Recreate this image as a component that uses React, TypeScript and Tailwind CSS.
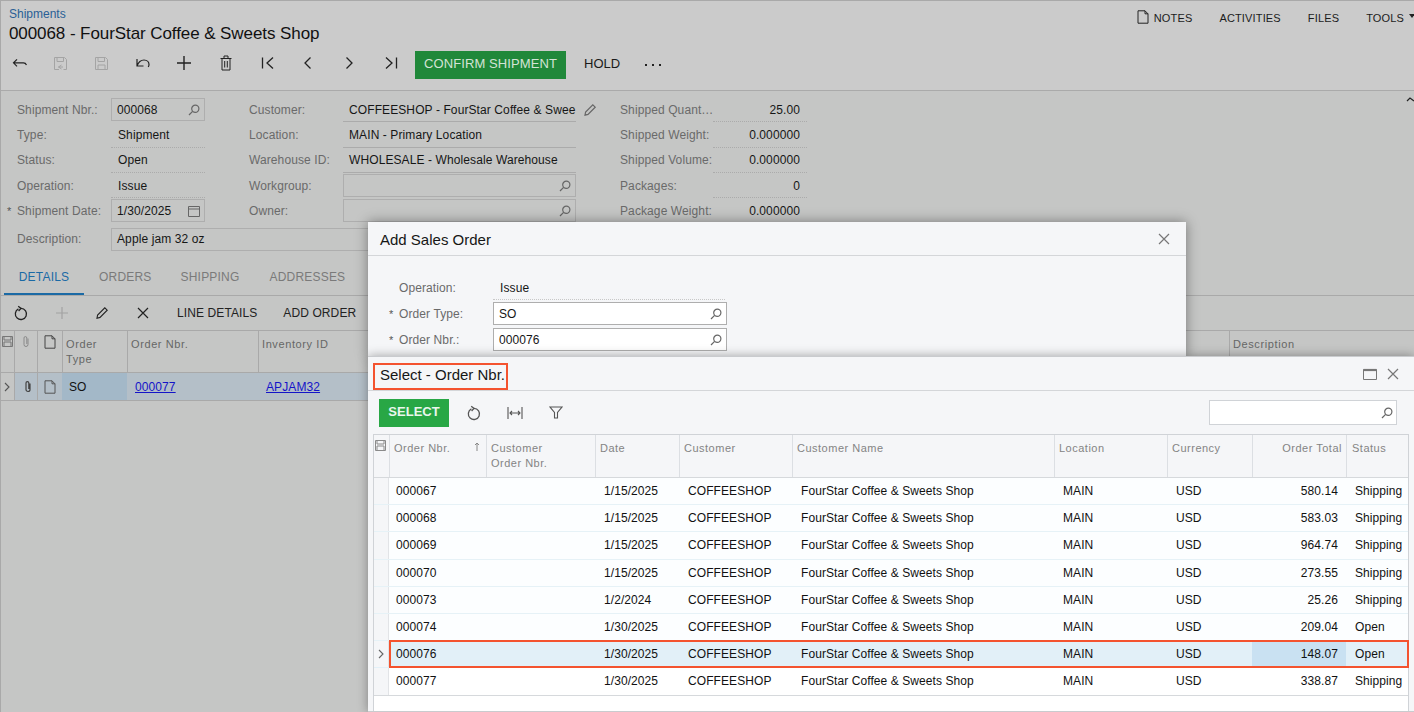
import React from "react";

type P = { className?: string; children?: React.ReactNode; w?: number; h?: number; sw?: number };
const Ic = ({ className = "", children, w = 16, h = 16, sw = 1.2 }: P) => (
  <svg width={w} height={h} viewBox={`0 0 ${w} ${h}`} fill="none" stroke="currentColor" strokeWidth={sw} className={className}>
    {children}
  </svg>
);
const Search = ({ className = "" }: { className?: string }) => (
  <Ic w={12} h={12} className={className}>
    <circle cx="7.3" cy="4.8" r="3.6" />
    <path d="M4.6 7.4 1 11" />
  </Ic>
);
const Close = ({ className = "" }: { className?: string }) => (
  <Ic w={12} h={12} className={className}>
    <path d="M1 1 11 11M11 1 1 11" />
  </Ic>
);
const Refresh = ({ className = "" }: { className?: string }) => (
  <Ic w={14} h={16} sw={1.3} className={className}>
    <path d="M4.4 3.9A5.6 5.6 0 1 0 7 3.3" />
    <path d="M4.2 1.2 7 3.4 4.6 6" />
  </Ic>
);
const Note = ({ className = "" }: { className?: string }) => (
  <Ic w={12} h={14} sw={1} className={className}>
    <path d="M1 .8h7l3 3v9.4H1zM8 .8v3h3" />
  </Ic>
);

const label = "text-[12px] tracking-[0.1px] text-[#6a6a6a]";
const val = "text-[12px] tracking-[0.1px] text-[#161616]";

const Dotted = ({ l, v, right }: { l: string; v: string; right?: boolean }) => (
  <div className="flex h-[25.3px] items-center">
    <span className={`${label} ${right ? "w-[93px]" : "w-[94px]"} whitespace-nowrap`}>{l}</span>
    <span
      className={`${val} flex h-full w-[94px] items-center border-b border-dotted border-[#ababab] pt-[1px] ${
        right ? "justify-end pr-[7px]" : "pl-[7px]"
      }`}
    >
      {v}
    </span>
  </div>
);

const Input = ({ v, w, icon, bg = "" }: { v?: string; w: string; icon?: React.ReactNode; bg?: string }) => (
  <div className={`${w} ${bg} flex h-[23px] items-center justify-between border border-[#aeaeae] pl-[5px] pr-[4px] ${val}`}>
    <span>{v}</span>
    {icon}
  </div>
);

const Req = () => <span className="absolute -left-[10px] top-[1px] text-[11px] text-[#555]">*</span>;

const Under = ({ l, v, edit }: { l: string; v: string; edit?: boolean }) => (
  <div className="flex h-[25.3px] items-center">
    <span className={`${label} w-[94px]`}>{l}</span>
    <span className={`${val} flex h-full w-[233px] items-center whitespace-nowrap border-b border-[#ababab] pl-[6px] pt-[1px]`}>
      {v}
    </span>
    {edit && (
      <Ic w={14} h={14} className="ml-[7px] text-[#666]">
        <path d="M2 12.2 2.6 9 9.8 1.8l2.4 2.4L5 11.4z" />
      </Ic>
    )}
  </div>
);

const rows = [
  ["000067", "1/15/2025", "580.14", "Shipping"],
  ["000068", "1/15/2025", "583.03", "Shipping"],
  ["000069", "1/15/2025", "964.74", "Shipping"],
  ["000070", "1/15/2025", "273.55", "Shipping"],
  ["000073", "1/2/2024", "25.26", "Shipping"],
  ["000074", "1/30/2025", "209.04", "Open"],
  ["000076", "1/30/2025", "148.07", "Open"],
  ["000077", "1/30/2025", "338.87", "Shipping"],
];
const cols = "grid grid-cols-[15px_97px_109px_84px_113px_262px_113px_85px_94px_63px]";
const headCell = "border-l border-[#dcdfe3] pl-[4px] pr-[4px] pt-[6px] text-[11px] leading-[15px] tracking-[0.5px] text-[#848484]";
const baseHead = "border-l border-[#a9a9a9] px-[3px] pt-[6px] text-[11px] leading-[15px] tracking-[0.6px] text-[#666]";

export default function App() {
  return (
    <div className="relative h-[712px] w-[1414px] overflow-hidden border-l border-t border-[#a9a9a9] bg-[#c5c6c5] font-['Liberation_Sans',Arial,sans-serif]">
      {/* Header */}
      <header className="h-[90px] border-b border-[#aaaaaa] bg-[#cbcbcb] pl-[8px] pt-[6px]">
        <div className="flex justify-between">
          <div>
            <div className="h-[14px] text-[12px] leading-[14px] text-[#2a5f96]">Shipments</div>
            <h1 className="mt-[1px] text-[17px] leading-[24px] tracking-[-0.08px] text-[#111]">000068 - FourStar Coffee &amp; Sweets Shop</h1>
          </div>
          <div className="flex h-[22px] items-start pt-[3px] text-[11px] tracking-[0.15px] text-[#1c1c1c]">
            <Note className="mr-[5px] text-[#222]" />
            <span className="mr-[27px]">NOTES</span>
            <span className="mr-[27px]">ACTIVITIES</span>
            <span className="mr-[27px]">FILES</span>
            <span>TOOLS</span>
            <span className="ml-[5px] mr-[-1px] mt-[4px] h-0 w-0 border-x-[3px] border-t-[4px] border-x-transparent border-t-[#222]" />
          </div>
        </div>
        <div className="-ml-[8px] mt-[5px] flex h-[28px] items-center pl-[11px]">
          <div className="mb-[4px] flex w-[403px] items-center text-[#222]">
            <div className="flex w-[41px] shrink-0">
              <Ic w={15} h={12} className="text-[#222]">
                <path d="M14.5 8c-.6-1.5-1.5-2.2-3-2.2H1.5M5 2.3 1.5 5.8 5 9.3" />
              </Ic>
            </div>
            <div className="flex w-[41px] shrink-0">
              <Ic w={15} h={15} sw={1} className="text-[#a4a4a4]">
                <path d="M6 13.5H1.5v-12h10l2 2v10h-3M4 1.5v4h6.5v-4M8.5 9 5.5 11l3 2M5.5 11H10" />
              </Ic>
            </div>
            <div className="flex w-[41px] shrink-0">
              <Ic w={15} h={15} sw={1} className="text-[#a4a4a4]">
                <path d="M1.5 1.5h10l2 2v10h-12zM4 1.5v4h6.5v-4M4 13.5V9h7v4.5" />
              </Ic>
            </div>
            <div className="flex w-[41px] shrink-0">
              <Ic w={16} h={14} sw={1.2}>
                <path d="M2 3v7h6.5M2 10C3.5 6 6 4 9 4c3.2 0 5 2.2 5 4.5 0 1-.3 1.8-.8 2.5" />
              </Ic>
            </div>
            <div className="flex w-[41px] shrink-0 pl-[1px]">
              <Ic w={14} h={14} sw={1.4}>
                <path d="M7 0v14M0 7h14" />
              </Ic>
            </div>
            <div className="flex w-[41px] shrink-0 pl-[3px]">
              <Ic w={12} h={16} sw={1}>
                <path d="M.5 3.5h11M2 3.5V15h8V3.5M4 3.5V1h4v2.5M4.7 6v6.5M7.3 6v6.5" />
              </Ic>
            </div>
            {[
              "M1.5 1.5v11M12 1.5 6 7l6 5.5",
              "M8.5 1.5 3 7l5.5 5.5",
              "M3.5 1.5 9 7l-5.5 5.5",
              "M2 1.5 8 7l-6 5.5M12.5 1.5v11",
            ].map((d, i) => (
              <div key={i} className="flex w-[41px] shrink-0 justify-start pl-[3px]">
                <Ic w={14} h={14} sw={1.3}>
                  <path d={d} />
                </Ic>
              </div>
            ))}
          </div>
          <div className="flex h-[28px] w-[151px] items-center justify-center bg-[#20883a] pb-[3px] text-[13px] tracking-[0.1px] text-[#d3e3d6]">
            CONFIRM SHIPMENT
          </div>
          <span className="mb-[3px] ml-[18px] text-[13px] text-[#1a1a1a]">HOLD</span>
          <span className="mb-[1px] ml-[25px] flex gap-[5px]">
            <i className="h-[2px] w-[2px] bg-[#222]" />
            <i className="h-[2px] w-[2px] bg-[#222]" />
            <i className="h-[2px] w-[2px] bg-[#222]" />
          </span>
        </div>
      </header>

      {/* Form */}
      <section className="relative h-[205px] border-b border-[#a9a9a9] pl-[16px] pt-[6px]">
        <svg width="8" height="6" className="absolute right-[0px] top-[5px]" fill="none" stroke="#222" strokeWidth="1.2">
          <path d="M1 5 4 2l4 3" />
        </svg>
        <div className="flex">
          <div className="w-[232px]">
            <div className="flex h-[25.3px] items-center">
              <span className={`${label} w-[94px]`}>Shipment Nbr.:</span>
              <Input v="000068" w="w-[94px]" icon={<Search className="text-[#666]" />} />
            </div>
            <Dotted l="Type:" v="Shipment" />
            <Dotted l="Status:" v="Open" />
            <Dotted l="Operation:" v="Issue" />
            <div className="flex h-[25.3px] items-center">
              <span className={`${label} relative w-[94px]`}>
                <Req />
                Shipment Date:
              </span>
              <Input
                v="1/30/2025"
                w="w-[94px]"
                icon={
                  <Ic w={12} h={12} sw={1} className="text-[#666]">
                    <path d="M.5 1.5h11v10H.5zM.5 4h11" />
                  </Ic>
                }
              />
            </div>
          </div>
          <div className="w-[371px]">
            <Under l="Customer:" v="COFFEESHOP - FourStar Coffee & Swee" edit />
            <Under l="Location:" v="MAIN - Primary Location" />
            <Under l="Warehouse ID:" v="WHOLESALE - Wholesale Warehouse" />
            <div className="flex h-[25.3px] items-center">
              <span className={`${label} w-[94px]`}>Workgroup:</span>
              <Input w="w-[233px]" icon={<Search className="text-[#666]" />} />
            </div>
            <div className="flex h-[25.3px] items-center">
              <span className={`${label} w-[94px]`}>Owner:</span>
              <Input w="w-[233px]" icon={<Search className="text-[#666]" />} />
            </div>
          </div>
          <div>
            <Dotted right l="Shipped Quant…" v="25.00" />
            <Dotted right l="Shipped Weight:" v="0.000000" />
            <Dotted right l="Shipped Volume:" v="0.000000" />
            <Dotted right l="Packages:" v="0" />
            <Dotted right l="Package Weight:" v="0.000000" />
          </div>
        </div>
        <div className="mt-[4.5px] flex h-[23px] items-center">
          <span className={`${label} w-[94px]`}>Description:</span>
          <Input v="Apple jam 32 oz" w="w-[465px]" />
        </div>
        {/* Tabs */}
        <div className="-ml-[13px] mt-[20px] flex h-[24px] text-[12px] leading-[12px] tracking-[0.2px] text-[#7a7a7a]">
          <span className="mr-[15px] h-[24px] w-[80px] border-b-[2px] border-[#1b6aa5] text-center text-[#1b6aa5]">DETAILS</span>
          <span className="mr-[29px]">ORDERS</span>
          <span className="mr-[30px]">SHIPPING</span>
          <span>ADDRESSES</span>
        </div>
      </section>

      {/* Grid toolbar */}
      <div className="flex h-[35px] items-center border-b border-[#a9a9a9] pl-[13px] text-[#222]">
        <Refresh className="mr-[27px]" />
        <Ic w={14} h={14} sw={1.2} className="mr-[26px] text-[#a2a2a2]">
          <path d="M7 1v12M1 7h12" />
        </Ic>
        <Ic w={14} h={14} sw={1.1} className="mr-[28px]">
          <path d="M2 12.2 2.6 9 9.8 1.8l2.4 2.4L5 11.4z" />
        </Ic>
        <Close className="mr-[28px]" />
        <span className="mr-[26px] text-[12px] tracking-[0.1px]">LINE DETAILS</span>
        <span className="text-[12px] tracking-[0.1px]">ADD ORDER</span>
      </div>

      {/* Base grid */}
      <div className="grid h-[42px] grid-cols-[13px_23px_25px_65px_131px_971px_1fr] border-b border-[#a9a9a9]">
        <div className="pl-[1px] pt-[5px] text-[#777]">
          <Ic w={11} h={11} sw={1}>
            <path d="M.5.5h10v10H.5zM2 .5v3.5h7V.5M2 6h7v4.5H2z" />
          </Ic>
        </div>
        <div className="border-l border-[#a9a9a9] pl-[6px] pt-[4px] text-[#8a8a8a]">
          <Ic w={10} h={13} sw={1}>
            <path d="M7 3.5v6a2 2 0 0 1-4 0V3a1.4 1.4 0 0 1 2.8 0v6" />
          </Ic>
        </div>
        <div className="border-l border-[#a9a9a9] pl-[6px] pt-[4px] text-[#444]">
          <Note />
        </div>
        <div className={baseHead}>
          Order
          <br />
          Type
        </div>
        <div className={baseHead}>Order Nbr.</div>
        <div className={baseHead}>Inventory ID</div>
        <div className={baseHead}>Description</div>
      </div>
      <div className="grid h-[28px] grid-cols-[13px_23px_25px_65px_131px_1fr] items-stretch border-b border-[#a9a9a9] bg-[#b4bfc8] text-[12px] tracking-[0.1px]">
        <div className="flex items-center bg-[#c5c6c5] pl-[3px] text-[#555]">
          <Ic w={7} h={10} sw={1.1}>
            <path d="M1 1l4 4-4 4" />
          </Ic>
        </div>
        <div className="flex items-center border-l border-[#a9a9a9] pl-[8px] text-[#444]">
          <Ic w={10} h={13} sw={1.2}>
            <path d="M7 3.5v6a2 2 0 0 1-4 0V3a1.4 1.4 0 0 1 2.8 0v6" />
          </Ic>
        </div>
        <div className="flex items-center border-l border-[#a9a9a9] pl-[6px] text-[#555]">
          <Note />
        </div>
        <div className="flex items-center bg-[#a3b8c8] pl-[7px] text-[#111]">SO</div>
        <div className="flex items-center pl-[8px] text-[#1414c8] underline">000077</div>
        <div className="flex items-center pl-[8px] text-[#1414c8] underline">APJAM32</div>
      </div>

      {/* Add Sales Order dialog */}
      <div className="absolute left-[367px] top-[221px] h-[135px] w-[818px] bg-[#f5f6f8] shadow-[0_0_12px_rgba(0,0,0,0.4)]">
        <div className="flex h-[34px] items-center justify-between border-b border-[#d4d6d9] pl-[12px] pr-[16px] pt-[4px]">
          <span className="text-[15px] text-[#161616]">Add Sales Order</span>
          <Close className="-mt-[4px] text-[#777]" />
        </div>
        <div className="pl-[31px] pt-[20px]">
          <div className="flex h-[24px] items-center">
            <span className={`${label} w-[94px]`}>Operation:</span>
            <span className={`${val} flex h-full w-[232px] items-center border-b border-dotted border-[#c8c8c8] pl-[7px]`}>Issue</span>
          </div>
          <div className="mt-[2px] flex h-[23px] items-center">
            <span className={`${label} relative w-[94px]`}>
              <Req />
              Order Type:
            </span>
            <Input v="SO" w="w-[234px]" bg="bg-white" icon={<Search className="text-[#666]" />} />
          </div>
          <div className="mt-[3px] flex h-[23px] items-center">
            <span className={`${label} relative w-[94px]`}>
              <Req />
              Order Nbr.:
            </span>
            <Input v="000076" w="w-[234px]" bg="bg-white" icon={<Search className="text-[#666]" />} />
          </div>
        </div>
      </div>

      {/* Select dialog */}
      <div className="absolute left-[367px] top-[355px] h-[356px] w-[1046px] border-b border-t border-[#c9cbce] bg-[#f5f6f8] shadow-[0_0_10px_rgba(0,0,0,0.35)]">
        <div className="flex h-[34px] items-center justify-between border-b border-[#d4d6d9] pl-[12px] pr-[15px]">
          <span className="pt-[3px] text-[15px] text-[#161616]">Select - Order Nbr.</span>
          <div className="flex items-center gap-[10px] text-[#777]">
            <Ic w={14} h={12} sw={1}>
              <path d="M.5 1.5h13v10H.5z" />
              <path d="M.5 2h13" strokeWidth="2.2" />
            </Ic>
            <Close />
          </div>
        </div>
        <div className="absolute left-[5px] top-[6px] h-[27px] w-[135px] border-2 border-[#f4532f]" />
        <div className="flex h-[43px] items-center justify-between pl-[11px] pr-[17px]">
          <div className="flex items-center text-[#555]">
            <div className="flex h-[28px] w-[70px] items-center justify-center bg-[#28a745] pb-[2px] text-[13px] font-bold text-[#eaf6ec]">SELECT</div>
            <Refresh className="ml-[18px]" />
            <Ic w={16} h={14} sw={1.1} className="ml-[26px]">
              <path d="M1 1v12M15 1v12M3 7h10M5 5 3 7l2 2M11 5l2 2-2 2" />
            </Ic>
            <Ic w={14} h={13} sw={1.1} className="ml-[26px]">
              <path d="M1 1h12L8.5 6.5V12h-3V6.5z" />
            </Ic>
          </div>
          <div className="flex h-[25px] w-[188px] items-center justify-end border border-[#d0d3d7] bg-white pr-[3px] text-[#666]">
            <Search />
          </div>
        </div>
        <div className="relative ml-[5px] h-[277px] w-[1036px] border-l border-r border-t border-[#d0d3d7] bg-white">
          <div className={`${cols} h-[43px] border-b border-[#d6d9dc] bg-[#f5f6f8]`}>
            <div className="pl-[1px] pt-[5px] text-[#8a8a8a]">
              <Ic w={11} h={11} sw={1}>
                <path d="M.5.5h10v10H.5zM2 .5v3.5h7V.5M2 6h7v4.5H2z" />
              </Ic>
            </div>
            <div className={`${headCell} relative pl-[3px]`}>
              Order Nbr.
              <svg width="6" height="9" className="absolute right-[6px] top-[7px]" fill="none" stroke="#888">
                <path d="M3 9V1M1 3l2-2 2 2" />
              </svg>
            </div>
            <div className={headCell}>
              Customer
              <br />
              Order Nbr.
            </div>
            <div className={headCell}>Date</div>
            <div className={headCell}>Customer</div>
            <div className={headCell}>Customer Name</div>
            <div className={headCell}>Location</div>
            <div className={headCell}>Currency</div>
            <div className={`${headCell} text-right`}>Order Total</div>
            <div className={`${headCell} pl-[5px]`}>Status</div>
          </div>
          {rows.map((r, i) => {
            const sel = i === 6;
            return (
              <div
                key={r[0]}
                className={`${cols} relative h-[27.2px] items-stretch border-b text-[12px] tracking-[0.08px] text-[#111] ${
                  sel ? "border-[#e2f0f8] bg-[#e2f0f8]" : i === 7 ? "border-[#d6d9dc] bg-white" : "border-[#e6f2f7] bg-[#fcfeff]"
                }`}
              >
                <div className="flex items-center border-r border-[#e2e4e7] bg-[#f5f6f8] pl-[4px] text-[#666]">
                  {sel && (
                    <Ic w={7} h={10} sw={1.1}>
                      <path d="M1 1l4 4-4 4" />
                    </Ic>
                  )}
                </div>
                <div className="flex items-center pl-[7px]">{r[0]}</div>
                <div />
                <div className="flex items-center pl-[9px]">{r[1]}</div>
                <div className="flex items-center pl-[9px]">COFFEESHOP</div>
                <div className="flex items-center pl-[9px]">FourStar Coffee &amp; Sweets Shop</div>
                <div className="flex items-center pl-[9px]">MAIN</div>
                <div className="flex items-center pl-[9px]">USD</div>
                <div className={`flex items-center justify-end pr-[8px] ${sel ? "bg-[#c9e1f2]" : ""}`}>{r[2]}</div>
                <div className="flex items-center pl-[9px]">{r[3]}</div>
                {sel && <div className="absolute -right-[1px] -top-[1px] bottom-[-1px] left-[15px] border-2 border-[#f4532f]" />}
              </div>
            );
          })}
        </div>
      </div>
    </div>
  );
}
